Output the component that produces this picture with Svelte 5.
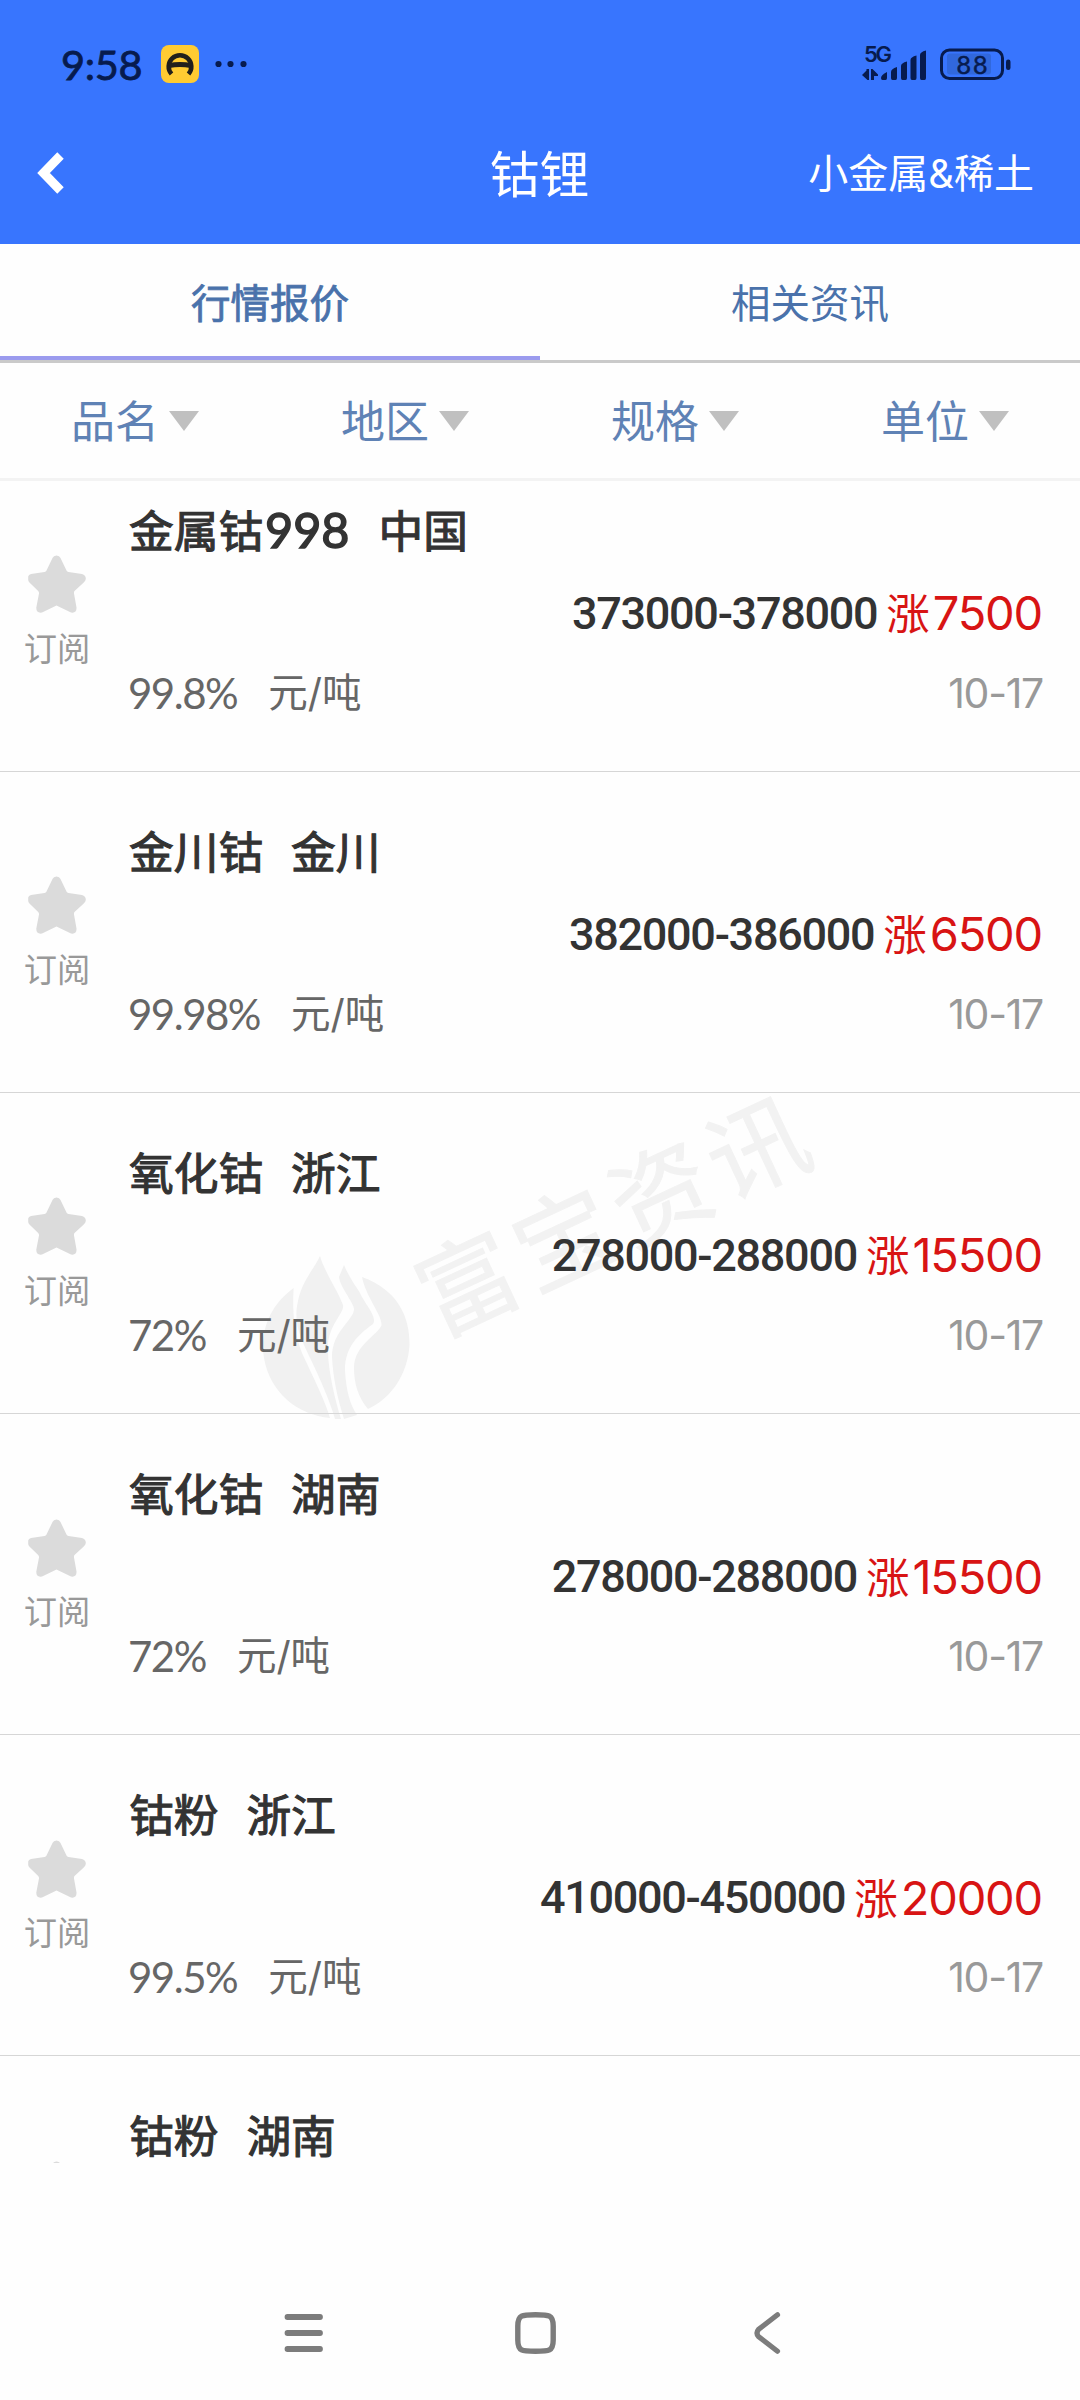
<script>
	const tabs = ['行情报价', '相关资讯'];
	const filters = ['品名', '地区', '规格', '单位'];

	let activeTab = $state(0);

	const quotes = [
		{ name: '金属钴', grade: '998', region: '中国', price: '373000-378000', change: '7500', spec: '99.8%', date: '10-17' },
		{ name: '金川钴', region: '金川', price: '382000-386000', change: '6500', spec: '99.98%', date: '10-17' },
		{ name: '氧化钴', region: '浙江', price: '278000-288000', change: '15500', spec: '72%', date: '10-17' },
		{ name: '氧化钴', region: '湖南', price: '278000-288000', change: '15500', spec: '72%', date: '10-17' },
		{ name: '钴粉', region: '浙江', price: '410000-450000', change: '20000', spec: '99.5%', date: '10-17' },
		{ name: '钴粉', region: '湖南' }
	];
</script>

<div class="screen">
	<header>
		<div class="status">
			<span class="clock">9:58</span>
			<svg class="app-icon" width="38" height="38" viewBox="0 0 38 38">
				<rect width="38" height="38" rx="8" fill="#ffcb32" />
				<path d="M10.5 29 A11.3 11.3 0 1 1 27.5 29" fill="none" stroke="#22201c" stroke-width="4.6" />
				<path d="M8 20.5 Q19 18.5 30 20.5" fill="none" stroke="#22201c" stroke-width="5" />
			</svg>
			<svg class="more" width="32" height="8" viewBox="0 0 32 8" fill="#071b4e">
				<circle cx="3.5" cy="4" r="3.1" />
				<circle cx="15.5" cy="4" r="3.1" />
				<circle cx="28.5" cy="4" r="3.1" />
			</svg>
			<svg class="signal" width="150" height="56" viewBox="0 -10 150 56" fill="#071b4e">
				<text class="net" x="2" y="16" textLength="28">5G</text>
				<path d="M0 29 L4.5 24.5 V23 H7 V34 H5.5 Z M9 23 H10.5 L16 28.5 V30 H12 V34 H9 Z" />
				<path d="M19 32 q0 -3 6 -6 V32 q0 2 -1.5 2 H20.5 q-1.5 0 -1.5 -2 Z" />
				<path d="M29 26 q0 -3 6 -5 V32 q0 2 -1.5 2 H30.5 q-1.5 0 -1.5 -2 Z" />
				<path d="M39 20 q0 -3 6 -4.5 V32 q0 2 -1.5 2 H40.5 q-1.5 0 -1.5 -2 Z" />
				<path d="M48.5 14 q0 -3 6 -4.5 V32 q0 2 -1.5 2 H50 q-1.5 0 -1.5 -2 Z" />
				<path d="M58 9 q0 -3 6 -4.5 V32 q0 2 -1.5 2 H59.5 q-1.5 0 -1.5 -2 Z" />
				<rect x="79.5" y="4" width="61" height="28.5" rx="8" fill="none" stroke="#071b4e" stroke-width="3" />
				<rect x="85" y="7.5" width="44" height="21" rx="3" fill="#3168dd" />
				<rect x="144" y="13.5" width="4.5" height="10.5" rx="2.2" />
				<text class="level" x="94.5" y="27.5" textLength="31">88</text>
			</svg>
		</div>
		<div class="titlebar">
			<svg class="back" width="28" height="42" viewBox="0 0 28 42">
				<path d="M23.5 3.5 L6.5 21 L23.5 38.5" fill="none" stroke="#fff" stroke-width="9" />
			</svg>
			<h1>钴锂</h1>
			<span class="switch">小金属&amp;稀土</span>
		</div>
	</header>

	<nav class="tabs">
		{#each tabs as tab, i}
			<button class:active={i === activeTab} onclick={() => (activeTab = i)}>{tab}</button>
		{/each}
	</nav>

	<div class="filters">
		{#each filters as filter}
			<div class="filter">
				<span>{filter}</span>
				<i class="caret"></i>
			</div>
		{/each}
	</div>

	<main>
		<div class="watermark">
			<svg width="152" height="166" viewBox="0 0 152 166" fill="#f1f1f1">
				<path d="M33.6 33 C8 52 0 78 4 103 C10 138 38 160 70 163 C65 145 51 118 42 98 C35 80 32 60 33.6 33 Z" />
				<path d="M60 1 C64 16 78 36 83 50 C85 58 66 72 68 96 C68 115 75 145 81 164 L75 164 C70 146 60 124 52 107 C40 82 33 68 38 46 C42 26 54 14 60 1 Z" />
				<path d="M84 10 C89 22 95 30 100 38 C104 48 118 62 113 69 C98 80 85 92 85 115 C86 135 90 150 97 160 L84 164 C77 142 73 122 72 102 C72 76 94 65 94 54 C94 48 80 32 79 22 Z" />
				<path d="M102 22 C138 35 150 62 149.5 90 C148 118 132 143 108 154 C98 142 94 128 94 113 C94 90 118 80 121.6 70 C122 60 106 42 102 22 Z" />
			</svg>
			<span class="brand">富宝资讯</span>
		</div>
		<ul>
			{#each quotes as q}
				<li>
					<div class="subscribe">
						<svg width="58" height="58" viewBox="0 0 58 58">
							<path
								d="M24.5 3 Q25.5 0.5 28.5 0.5 Q31.5 0.5 32.5 3 L38.5 15.5 Q39 16.8 40.5 17 L54 19 Q58 20 57.8 24 Q57.5 25.8 56 27.2 L46.5 36 Q45.8 37 46 38.5 L48.5 52.5 Q48.8 58.5 43 57.6 L28.5 50.5 L14 57.6 Q8 58.5 8.3 52.5 L11 38.5 Q11.2 37 10.2 36 L1.2 27.2 Q0 26 0.2 24 V21.5 Q0.5 19.6 3 19 L16.5 17 Q18 16.8 18.5 15.5 Z"
								fill="#dbdbdb"
							/>
						</svg>
						{#if q.price}
							<span>订阅</span>
						{/if}
					</div>
					<div class="info">
						<div class="name">
							<span>{q.name}{#if q.grade}<b>{q.grade}</b>{/if}</span>
							<span>{q.region}</span>
						</div>
						{#if q.price}
							<div class="quote">
								<span class="price">{q.price}</span>
								<span class="change">涨<b>{q.change}</b></span>
							</div>
							<div class="meta">
								<span class="spec">{q.spec}</span>
								<span class="unit">元/吨</span>
								<span class="date">{q.date}</span>
							</div>
						{/if}
					</div>
				</li>
			{/each}
		</ul>
	</main>

	<footer>
		<svg width="42" height="44" viewBox="0 0 42 44" stroke="#7c7c7c" stroke-width="5.8" stroke-linecap="round">
			<path d="M4.5 6 H37 M4.5 22 H37 M4.5 38 H37" />
		</svg>
		<svg width="42" height="44" viewBox="0 0 42 44" fill="none" stroke="#7c7c7c" stroke-width="5.4">
			<path d="M20.5 3.7 C34 3.7 38.2 3.7 38.2 15 V29 C38.2 40.3 34 40.3 20.5 40.3 C7 40.3 2.8 40.3 2.8 29 V15 C2.8 3.7 7 3.7 20.5 3.7 Z" />
		</svg>
		<svg width="42" height="44" viewBox="0 0 42 44" fill="none" stroke="#7c7c7c" stroke-width="5.2" stroke-linecap="round">
			<path d="M31.5 3.8 L12.5 18.5 Q9.5 22 12.5 25.5 L31.5 40.2" />
		</svg>
	</footer>
</div>

<style>
	:global(body) {
		background: #fefefe;
	}

	.screen {
		width: 1080px;
		height: 2400px;
		display: flex;
		flex-direction: column;
		overflow: hidden;
		background: #fefefe;
		font-family: Inter, 'Noto Sans CJK SC', sans-serif;
	}

	header {
		height: 244px;
		background: #3875fe;
		color: #fff;
	}

	.status {
		height: 100px;
		box-sizing: border-box;
		padding: 28px 68px 0 61px;
		display: flex;
		align-items: center;
		color: #071b4e;
	}

	.clock {
		width: 100px;
		font-family: Lato, sans-serif;
		font-size: 41.5px;
		letter-spacing: -0.3px;
		-webkit-text-stroke: 0.8px #071b4e;
	}

	.more {
		margin-left: 16px;
	}

	.signal {
		margin-left: auto;
	}

	.net {
		font-size: 22px;
		font-weight: 600;
	}

	.level {
		font-family: Lato, sans-serif;
		font-size: 25px;
		stroke: #071b4e;
		stroke-width: 0.5px;
	}

	.titlebar {
		height: 144px;
		box-sizing: border-box;
		padding: 2px 46px 0 37px;
		display: grid;
		grid-template-columns: 1fr auto 1fr;
		align-items: center;
	}

	.titlebar h1 {
		margin: 4px 0 0 8px;
		font-size: 50px;
		font-weight: 400;
		line-height: 60px;
	}

	.switch {
		justify-self: end;
		margin-top: 2px;
		font-size: 40px;
		line-height: 60px;
	}

	.tabs {
		height: 119px;
		box-sizing: border-box;
		display: flex;
		border-bottom: 3px solid #cacaca;
	}

	.tabs button {
		flex: 1;
		padding: 1px 0 0;
		border: 0;
		border-bottom: 4px solid transparent;
		background: none;
		font: inherit;
		font-size: 39.5px;
		color: #4a72ab;
	}

	.tabs button.active {
		border-bottom-color: #9b9bee;
		-webkit-text-stroke: 0.8px #4a72ab;
	}

	.filters {
		height: 118px;
		box-sizing: border-box;
		display: flex;
		border-bottom: 3px solid #f3f3f3;
	}

	.filter {
		flex: 1;
		display: flex;
		align-items: center;
		justify-content: center;
		gap: 10px;
		font-size: 44px;
		color: #5f82b5;
	}

	.filter span {
		padding-bottom: 4px;
	}

	.caret {
		border: 15.5px solid transparent;
		border-top: 20px solid #c0c0c0;
		border-bottom: 0;
	}

	main {
		height: 1682px;
		position: relative;
		overflow: hidden;
	}

	/* the list is scrolled a little, so the first row starts under the filters */
	ul {
		position: relative;
		margin: -30.5px 0 0;
		padding: 0;
		list-style: none;
	}

	li {
		height: 321.2px;
		box-sizing: border-box;
		display: flex;
		border-bottom: 1px solid #d6d6d6;
	}

	.subscribe {
		width: 114px;
		padding-top: 104.5px;
		display: flex;
		flex-direction: column;
		align-items: center;
		gap: 12.5px;
		font-size: 33.3px;
		line-height: 46px;
		color: #999;
	}

	.info {
		flex: 1;
		padding: 51px 37px 0 15px;
	}

	.name {
		display: flex;
		gap: 28px;
		font-size: 44.7px;
		line-height: 60px;
		color: #333;
		-webkit-text-stroke: 1.1px #333;
	}

	.name b {
		margin: 0 1px 0 2px;
		font-family: Lato, sans-serif;
		font-size: 48.5px;
		font-weight: 400;
		line-height: 1;
		-webkit-text-stroke: 1.5px #333;
	}

	.quote {
		height: 60px;
		margin-top: 22px;
		padding-right: 1px;
		display: flex;
		justify-content: flex-end;
		align-items: center;
		gap: 9px;
		line-height: 60px;
	}

	.price {
		font-family: Roboto, sans-serif;
		font-size: 45px;
		font-weight: 500;
		letter-spacing: -1.3px;
		color: #333;
	}

	.change {
		font-size: 43.5px;
		color: #d81414;
	}

	.change b {
		margin-left: 3px;
		font-size: 47px;
		font-weight: 400;
		letter-spacing: -1.2px;
	}

	.meta {
		margin-top: 19px;
		display: flex;
		align-items: center;
		font-size: 39.5px;
		line-height: 60px;
		color: #666;
	}

	.spec {
		margin-left: -1px;
		font-family: Lato, sans-serif;
		font-size: 42px;
		letter-spacing: -1.5px;
	}

	.unit {
		margin-left: 31px;
	}

	.date {
		margin-left: auto;
		font-size: 41px;
		letter-spacing: -1.3px;
		color: #999;
	}

	.watermark {
		position: absolute;
		left: 260px;
		top: 774px;
		color: #f2f2f2;
	}

	.brand {
		position: absolute;
		left: 143px;
		top: -100px;
		font-size: 99px;
		line-height: 120px;
		letter-spacing: 7.5px;
		white-space: nowrap;
		transform: rotate(-25deg);
		-webkit-text-stroke: 1px #f2f2f2;
	}

	footer {
		flex: 1;
		box-sizing: border-box;
		padding: 148px 9px 0 0;
		display: flex;
		justify-content: center;
		gap: 189.5px;
	}
</style>
